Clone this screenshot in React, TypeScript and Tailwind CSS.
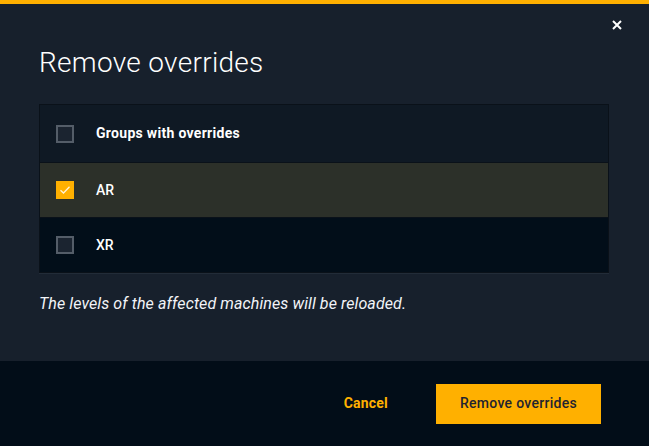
import { useState } from "react";

const rows = [
  { id: "AR", label: "AR" },
  { id: "XR", label: "XR" },
];

const Check = ({ checked }: { checked: boolean }) =>
  checked ? (
    <span className="flex h-[18px] w-[18px] items-center justify-center bg-[#ffb000]">
      <svg width="12" height="10" viewBox="0 0 12 10" fill="none">
        <path d="M1.5 5.2 4.5 8 10.5 1.8" stroke="#fff3d6" strokeWidth="1.3" />
      </svg>
    </span>
  ) : (
    <span className="block h-[18px] w-[18px] border-2 border-[#545d68] bg-[#1b2430]" />
  );

export default function App() {
  const [selected, setSelected] = useState<string[]>(["AR"]);
  const toggle = (id: string) =>
    setSelected((s) => (s.includes(id) ? s.filter((x) => x !== id) : [...s, id]));

  return (
    <div className="flex h-[446px] w-[649px] flex-col bg-[#17202c] font-['Roboto',sans-serif] text-white">
      <div className="h-[4px] bg-[#ffb000]" />
      <div className="relative flex-1 px-[39px]">
        <button className="absolute right-[26px] top-[15px] text-white">
          <svg width="12" height="12" viewBox="0 0 12 12">
            <path d="M2 2 10 10M10 2 2 10" stroke="#fff" strokeWidth="2" />
          </svg>
        </button>
        <h1 className="pt-[43px] text-[28px] font-light leading-[32px] tracking-[0.3px]">
          Remove overrides
        </h1>
        <div className="mt-[25px] mr-[1px] border border-[#0a1119] shadow-[0_1px_0_#222c38]">
          <div className="flex h-[57px] items-center bg-[#0f1924]">
            <div className="pl-[16px] pr-[22px]">
              <Check checked={false} />
            </div>
            <span className="text-[14px] font-bold tracking-[0.3px]">Groups with overrides</span>
          </div>
          {rows.map((r) => {
            const on = selected.includes(r.id);
            return (
              <div
                key={r.id}
                onClick={() => toggle(r.id)}
                className={
                  "flex h-[55px] cursor-pointer items-center border-t border-[#0a1119] " +
                  (on ? "bg-[#2c3029]" : "bg-[#020e19]")
                }
              >
                <div className="pl-[16px] pr-[22px]">
                  <Check checked={on} />
                </div>
                <span className="text-[14px] font-medium">{r.label}</span>
              </div>
            );
          })}
        </div>
        <p className="mt-[19px] text-[16px] italic tracking-[0.1px] text-[#f2f4f8]">
          The levels of the affected machines will be reloaded.
        </p>
      </div>
      <div className="flex h-[85px] items-center justify-end gap-[48px] bg-[#020d18] pr-[48px]">
        <button className="text-[14px] font-bold tracking-[0.2px] text-[#ffb000]">Cancel</button>
        <button className="h-[40px] w-[165px] bg-[#ffb000] text-[14px] font-medium tracking-[0.3px] text-[#1f2430]">
          Remove overrides
        </button>
      </div>
    </div>
  );
}
